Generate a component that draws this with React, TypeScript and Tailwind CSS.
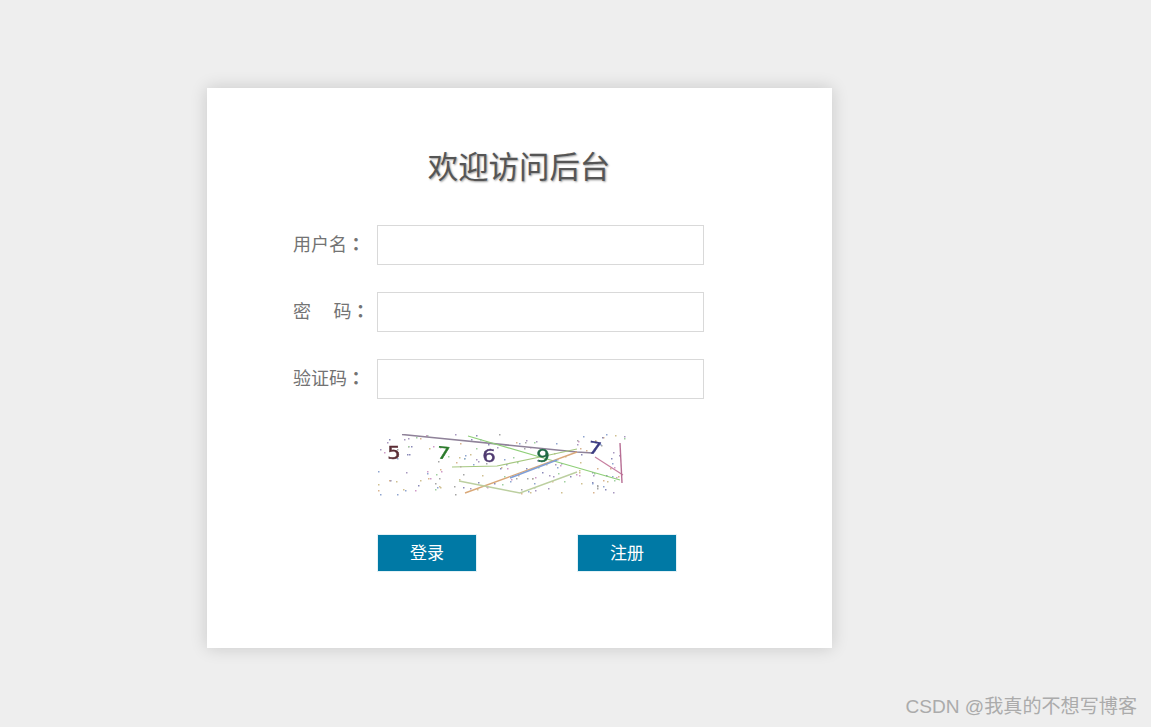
const FONT = "font-['Liberation_Serif','Noto_Sans_CJK_SC',serif]";

function Captcha() {
  let seed = 7;
  const rnd = () => {
    seed = (seed * 16807) % 2147483647;
    return seed / 2147483647;
  };
  const colors = ["#a898c0", "#8fa5d0", "#d9b48f", "#9fd09f", "#d09ac8", "#8a8ab8", "#d0c090", "#a5a5a5"];
  const dots = Array.from({ length: 190 }, () => ({
    x: 378 + Math.floor(rnd() * 248),
    y: 434 + Math.floor(rnd() * 61),
    c: colors[Math.floor(rnd() * colors.length)],
  }));
  const digits = [
    { t: "5", x: 394, y: 459, c: "#5a2d35", r: 0 },
    { t: "7", x: 443, y: 459, c: "#2a7a2a", r: 6 },
    { t: "6", x: 489, y: 462, c: "#4f3a70", r: 0 },
    { t: "9", x: 543, y: 462, c: "#1f6a45", r: 0 },
    { t: "7", x: 594, y: 454, c: "#3a3a80", r: 10 },
  ];
  return (
    <svg width="248" height="62" viewBox="378 434 248 62" className="block blur-[0.3px]">
      {dots.map((d, i) => (
        <rect key={i} x={d.x} y={d.y} width="1.5" height="1.5" fill={d.c} />
      ))}
      <g fill="none" strokeWidth="1.2">
        <polyline points="402,434.5 437,438 577,452 593,453" stroke="#8f8299" strokeWidth="1.6" />
        <polyline points="468,436 540,457 620,480" stroke="#8fcf78" />
        <polyline points="452,467 497,466 540,457 577,449" stroke="#a5c77f" />
        <polyline points="465,493 577,452" stroke="#d9a878" strokeWidth="1.4" />
        <polyline points="510,478 557,460" stroke="#7f9fd8" strokeWidth="1.4" />
        <polyline points="459,481 520,493 577,472" stroke="#bccfa0" strokeWidth="1.4" />
        <polyline points="595,457 623,475" stroke="#c77fa0" />
        <polyline points="620,443 622,483" stroke="#b86f95" strokeWidth="1.4" />
      </g>
      {digits.map((d, i) => (
        <text
          key={i}
          fill={d.c}
          stroke={d.c}
          strokeWidth="0.4"
          fontSize="17"
          textAnchor="middle"
          fontFamily="'DejaVu Sans', sans-serif"
          transform={`translate(${d.x} ${d.y}) rotate(${d.r}) scale(1.25 1)`}
        >
          {d.t}
        </text>
      ))}
    </svg>
  );
}

function Row({ label }: { label: string }) {
  return (
    <div className="flex items-center">
      <label className="w-[84px] whitespace-pre pb-[2px] text-[18px] leading-none text-[#737373]">
        {label}
        <span className="font-['Noto_Sans_CJK_TC',sans-serif] font-bold">：</span>
      </label>
      <input type="text" className="h-10 w-[327px] border border-[#d9d9d9] bg-white outline-none" />
    </div>
  );
}

function Btn({ children }: { children: React.ReactNode }) {
  return (
    <button
      type="button"
      className="h-[38px] w-[100px] border border-[#e3f1f6] bg-[#0079a5] text-[17px] leading-none text-white"
    >
      {children}
    </button>
  );
}

export default function App() {
  return (
    <div className={`relative h-[727px] w-full overflow-hidden bg-[#eeeeee] pl-[207px] pt-[88px] ${FONT}`}>
      <div className="h-[560px] w-[625px] bg-white pl-[86px] pt-[61px] shadow-[0_0_16px_rgba(0,0,0,0.16)]">
        <h1 className="mb-[38px] w-[452px] text-center text-[30.4px] leading-[38px] font-normal text-[#555] [text-shadow:1px_1px_2px_#999]">
          欢迎访问后台
        </h1>
        <div className="flex flex-col gap-[27px]">
          <Row label="用户名" />
          <Row label={"密\u3000 码"} />
          <Row label="验证码" />
        </div>
        <div className="ml-[85px] mt-[35px]">
          <Captcha />
        </div>
        <div className="ml-[84px] mt-[38px] flex gap-[100px]">
          <Btn>登录</Btn>
          <Btn>注册</Btn>
        </div>
      </div>
      <div className="absolute bottom-[8px] right-[14px] font-['Liberation_Sans','Noto_Sans_CJK_SC',sans-serif] text-[19.1px] leading-[24px] text-[#ababab]">
        CSDN @我真的不想写博客
      </div>
    </div>
  );
}
